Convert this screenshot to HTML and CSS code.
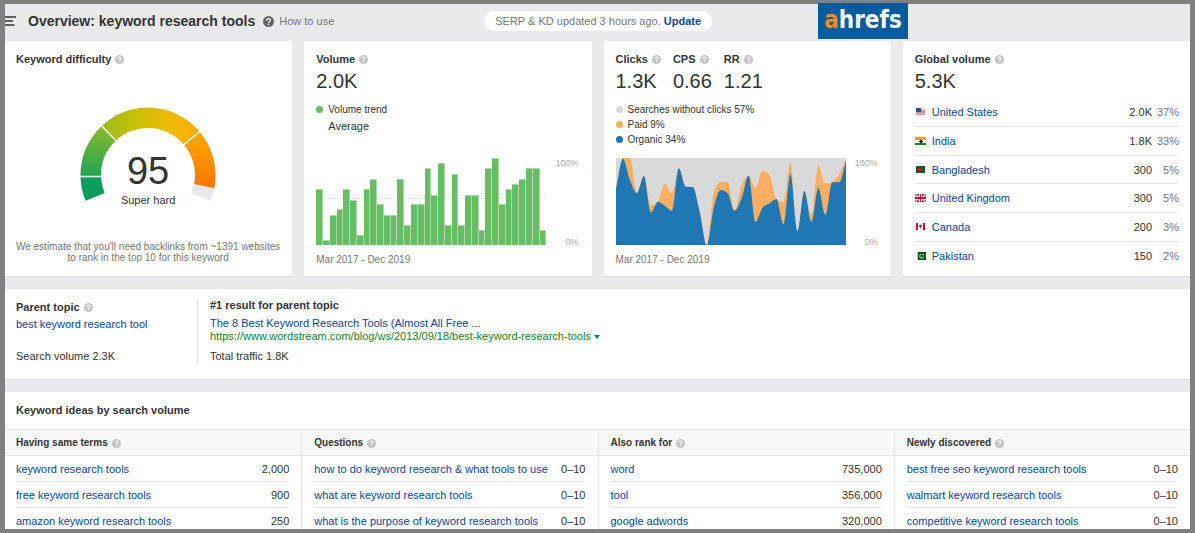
FILE: index.html
```html
<!DOCTYPE html>
<html lang="en">
<head>
<meta charset="utf-8">
<title>Overview: keyword research tools</title>
<link rel="stylesheet" href="styles.css">
<script src="charts.js" defer></script>
</head>
<body>
<svg class="defs" aria-hidden="true">
  <symbol id="help" viewBox="0 0 18 18">
    <circle cx="9" cy="9" r="9" fill="currentColor"/>
    <path d="M6 7.200C6 5.300 7.300 4.200 9 4.200s3 1.100 3 2.700C12 8.900 9 8.900 9 11" fill="none" stroke="#fff" stroke-width="2.200"/>
    <circle cx="9" cy="13.600" r="1.400" fill="#fff"/>
  </symbol>
</svg>
<div class="frame">
<div class="screen">
  <header class="topbar">
    <button class="menu" aria-label="Menu">
      <svg width="11" height="10" viewBox="0 0 11 10" stroke="#333" stroke-width="1.300"><path d="M0 1h11M0 5h8M0 9h9.500"/></svg>
    </button>
    <h1>Overview: keyword research tools</h1>
    <a class="how" href="#"><svg class="help help-dark"><use href="#help"/></svg>How to use</a>
    <p class="status">SERP &amp; KD updated 3 hours ago. <a href="#">Update</a></p>
  </header>

  <main>
    <div class="cards">
      <section class="card">
        <h2>Keyword difficulty <svg class="help"><use href="#help"/></svg></h2>
        <div class="gauge">
          <svg viewBox="0 0 136 100" width="136" height="100" aria-hidden="true">
            <defs>
              <linearGradient id="g1" gradientUnits="userSpaceOnUse" x1="0" y1="26" x2="0" y2="0"><stop offset="0" stop-color="#00995f"/><stop offset="1" stop-color="#10a359"/></linearGradient>
              <linearGradient id="g2" gradientUnits="userSpaceOnUse" x1="0" y1="0" x2="0" y2="-50"><stop offset="0" stop-color="#22a552"/><stop offset="1" stop-color="#8ebb2b"/></linearGradient>
              <linearGradient id="g3" gradientUnits="userSpaceOnUse" x1="-46" y1="0" x2="52" y2="0"><stop offset="0" stop-color="#98bb22"/><stop offset=".3" stop-color="#c3c007"/><stop offset=".65" stop-color="#ecbb08"/><stop offset="1" stop-color="#ffaf00"/></linearGradient>
              <linearGradient id="g4" gradientUnits="userSpaceOnUse" x1="0" y1="-43" x2="0" y2="13"><stop offset="0" stop-color="#ffab00"/><stop offset="1" stop-color="#ff7400"/></linearGradient>
            </defs>
            <g transform="translate(68 68)">
              <path fill="url(#g1)" d="M-62.400 25.800A67.500 67.500 0 0 1-67.500 1.800L-47 1.200A47 47 0 0 0-43.400 18z"/>
              <path fill="url(#g2)" d="M-67.500 1.800A67.500 67.500 0 0 1-46.300-49.100L-32.200-34.200A47 47 0 0 0-47 1.200z"/>
              <path fill="url(#g3)" d="M-46.300-49.100A67.500 67.500 0 0 1 51.600-43.500L35.900-30.300A47 47 0 0 0-32.200-34.200z"/>
              <path fill="url(#g4)" d="M51.600-43.500A67.500 67.500 0 0 1 66.200 13.200L46.100 9.200A47 47 0 0 0 35.900-30.300z"/>
              <path fill="#e9e9eb" d="M66.200 13.200A67.500 67.500 0 0 1 62.400 25.800L43.400 18A47 47 0 0 0 46.100 9.200z"/>
              <path stroke="#fff" stroke-width="1.400" d="M-69 1.500H-46M-47.500-50.500-31.500-33.500M53-44.500 35-29.500"/>
            </g>
          </svg>
          <div class="score"><strong>95</strong><span>Super hard</span></div>
        </div>
        <p class="note">We estimate that you'll need backlinks from ~1391 websites<br>to rank in the top 10 for this keyword</p>
      </section>

      <section class="card">
        <h2>Volume <svg class="help"><use href="#help"/></svg></h2>
        <p class="big">2.0K</p>
        <ul class="legend">
          <li><i class="dot green"></i>Volume trend</li>
          <li class="plain">Average</li>
        </ul>
        <div class="chart">
          <div class="bars" id="bars"></div>
          <div class="axis"><span>100%</span><span>0%</span></div>
        </div>
        <p class="range">Mar 2017 - Dec 2019</p>
      </section>

      <section class="card">
        <div class="stats">
          <div><h2>Clicks <svg class="help"><use href="#help"/></svg></h2><p class="big">1.3K</p></div>
          <div><h2>CPS <svg class="help"><use href="#help"/></svg></h2><p class="big">0.66</p></div>
          <div><h2>RR <svg class="help"><use href="#help"/></svg></h2><p class="big">1.21</p></div>
        </div>
        <ul class="legend">
          <li><i class="dot gray"></i>Searches without clicks 57%</li>
          <li><i class="dot orange"></i>Paid 9%</li>
          <li><i class="dot blue"></i>Organic 34%</li>
        </ul>
        <div class="chart">
          <svg class="area" viewBox="0 0 690 261" preserveAspectRatio="none" aria-hidden="true">
            <path id="paid" fill="#fdae61"/>
            <path id="organic" fill="#1f78b4"/>
          </svg>
          <div class="axis"><span>100%</span><span>0%</span></div>
        </div>
        <p class="range">Mar 2017 - Dec 2019</p>
      </section>

      <section class="card">
        <h2>Global volume <svg class="help"><use href="#help"/></svg></h2>
        <p class="big">5.3K</p>
        <table class="countries">
          <tr><td class="flag"><svg width="11" height="8" viewBox="0 0 11 8"><path fill="#e08a94" d="M1 0h9v7H1z"/><path fill="#f0d5d2" d="M6 0h4v2H6z"/><path fill="#e9b5b8" d="M1 5h9v1H1z"/><path fill="#3c4a78" d="M1 0h5v4H1z"/></svg></td><td><a href="#">United States</a></td><td class="num">2.0K</td><td class="pct">37%</td></tr>
          <tr><td class="flag"><svg width="11" height="8" viewBox="0 0 11 8"><path fill="#fff" d="M0 0h11v8H0z"/><path fill="#ff9933" d="M0 0h11v3H0z"/><path fill="#128807" d="M0 6h11v2H0z"/><path fill="#000080" d="M4 4h4v1H4zM5 3h2v3H5z"/></svg></td><td><a href="#">India</a></td><td class="num">1.8K</td><td class="pct">33%</td></tr>
          <tr><td class="flag"><svg width="11" height="8" viewBox="0 0 11 8"><path fill="#0a5c2c" d="M1 0h9v7H1z"/><circle cx="4.800" cy="3.500" r="2" fill="#f00010"/></svg></td><td><a href="#">Bangladesh</a></td><td class="num">300</td><td class="pct">5%</td></tr>
          <tr><td class="flag"><svg width="11" height="8" viewBox="0 0 11 8"><path fill="#1c2370" d="M0 0h11v8H0z"/><path stroke="#fff" stroke-width="1.600" d="M0 0l11 8M11 0L0 8"/><path stroke="#d5142b" stroke-width=".7" d="M0 0l11 8M11 0L0 8"/><path fill="#f3c4cc" d="M4 0h3v8H4zM0 2h11v4H0z"/><path fill="#d5142b" d="M5 0h1v8H5zM0 3h11v2H0z"/></svg></td><td><a href="#">United Kingdom</a></td><td class="num">300</td><td class="pct">5%</td></tr>
          <tr><td class="flag"><svg width="11" height="8" viewBox="0 0 11 8"><path fill="#fff" d="M1 0h9v7H1z"/><path fill="#c8102e" d="M1 0h2v7H1zM8 0h2v7H8zM5.500 1.300l.7 1.200.9-.2-.3 1.300-.9 1v1h-.6v-1l-1.200-1-.2-1.300.9.200z"/></svg></td><td><a href="#">Canada</a></td><td class="num">200</td><td class="pct">3%</td></tr>
          <tr><td class="flag"><svg width="11" height="8" viewBox="0 0 11 8"><path fill="#b9cdb9" d="M2 0h1v8H2z"/><path fill="#0a5a1c" d="M3 0h8v8H3z"/><path fill="none" stroke="#fff" stroke-width=".9" d="M6 2.200a2 2 0 1 0 2.600 2.600"/><path fill="#fff" d="M7.500 2h1.200v1.200H7.500z"/></svg></td><td><a href="#">Pakistan</a></td><td class="num">150</td><td class="pct">2%</td></tr>
        </table>
      </section>
    </div>

    <section class="card parent">
      <div class="topic">
        <h2>Parent topic <svg class="help"><use href="#help"/></svg></h2>
        <a href="#">best keyword research tool</a>
        <p>Search volume 2.3K</p>
      </div>
      <div class="result">
        <h2>#1 result for parent topic</h2>
        <a href="#">The 8 Best Keyword Research Tools (Almost All Free ...</a>
        <a class="url" href="#">https://www.wordstream.com/blog/ws/2013/09/18/best-keyword-research-tools<svg width="6" height="4" viewBox="0 0 6 4"><path fill="#0a8a4a" d="M0 0h6L3 4z"/></svg></a>
        <p>Total traffic 1.8K</p>
      </div>
    </section>

    <section class="ideas">
      <h2>Keyword ideas by search volume</h2>
      <div class="columns">
        <section class="column">
          <h3>Having same terms <svg class="help"><use href="#help"/></svg></h3>
          <table>
            <tr><td><a href="#">keyword research tools</a></td><td class="num">2,000</td></tr>
            <tr><td><a href="#">free keyword research tools</a></td><td class="num">900</td></tr>
            <tr><td><a href="#">amazon keyword research tools</a></td><td class="num">250</td></tr>
          </table>
        </section>
        <section class="column">
          <h3>Questions <svg class="help"><use href="#help"/></svg></h3>
          <table>
            <tr><td><a href="#">how to do keyword research &amp; what tools to use</a></td><td class="num">0–10</td></tr>
            <tr><td><a href="#">what are keyword research tools</a></td><td class="num">0–10</td></tr>
            <tr><td><a href="#">what is the purpose of keyword research tools</a></td><td class="num">0–10</td></tr>
          </table>
        </section>
        <section class="column">
          <h3>Also rank for <svg class="help"><use href="#help"/></svg></h3>
          <table>
            <tr><td><a href="#">word</a></td><td class="num">735,000</td></tr>
            <tr><td><a href="#">tool</a></td><td class="num">356,000</td></tr>
            <tr><td><a href="#">google adwords</a></td><td class="num">320,000</td></tr>
          </table>
        </section>
        <section class="column">
          <h3>Newly discovered <svg class="help"><use href="#help"/></svg></h3>
          <table>
            <tr><td><a href="#">best free seo keyword research tools</a></td><td class="num">0–10</td></tr>
            <tr><td><a href="#">walmart keyword research tools</a></td><td class="num">0–10</td></tr>
            <tr><td><a href="#">competitive keyword research tools</a></td><td class="num">0–10</td></tr>
          </table>
        </section>
      </div>
    </section>
  </main>
</div>
<div class="logo"><span>a</span>hrefs</div>
</div>
</body>
</html>
```
FILE: styles.css
```css
* { box-sizing: border-box; }

body, h1, h2, h3, p, ul { margin: 0; padding: 0; }

body {
  font: 11px/14px "Liberation Sans", Arial, sans-serif;
  color: #333;
}

a { color: #0a469b; text-decoration: none; }

table { width: 100%; border-collapse: separate; border-spacing: 0; }
td { padding: 0; }

.defs { display: none; }

.frame {
  position: relative;
  height: 100vh;
  padding: 4px 5px;
  background: #808080;
}

.screen {
  height: 100%;
  overflow: hidden;
  background: #eaeaec;
}

/* Top bar */
.topbar {
  display: flex;
  align-items: center;
  height: 37px;
  padding-bottom: 3px;
}

.menu {
  display: flex;
  padding: 0;
  margin-right: 12px;
  border: 0;
  background: none;
}

h1 { font-size: 14px; line-height: 18px; font-weight: bold; }

.how {
  display: flex;
  align-items: center;
  gap: 5px;
  margin-left: 8px;
  color: #777;
}

.help {
  width: 9px;
  height: 9px;
  flex: none;
  color: #c4c4c4;
}

.help-dark { width: 11px; height: 11px; color: #666; }

.status {
  margin-left: 150px;
  padding: 3px 11px;
  border-radius: 10px;
  background: #fff;
  color: #777;
}

.status a { font-weight: bold; }

.logo {
  position: absolute;
  top: 3px;
  right: 287px;
  width: 90px;
  height: 36px;
  background: #005b9f;
  color: #fff;
  font: bold 24px/34px "DejaVu Sans Condensed", "DejaVu Sans", sans-serif;
  text-align: center;
}

.logo span { color: #ff8c0a; }

/* Cards */
.cards {
  display: grid;
  grid-template-columns: repeat(4, 1fr);
  gap: 12px;
}

.card {
  display: flex;
  flex-direction: column;
  padding: 11px 12px 9px;
  border-bottom: 1px solid #dcdcde;
  background: #fff;
}

h2, h3 {
  display: flex;
  align-items: center;
  gap: 4px;
  font-size: 11px;
  line-height: 14px;
  font-weight: bold;
}

.big { margin-top: 3px; font-size: 20px; line-height: 24px; }

.gauge {
  display: grid;
  justify-content: center;
  margin-top: 41px;
}

.gauge > * { grid-area: 1 / 1; }

.score {
  display: flex;
  flex-direction: column;
  align-items: center;
  justify-content: flex-end;
}

.score strong { font-size: 38px; line-height: 44px; font-weight: normal; }

.note {
  margin: auto -8px 4px;
  font-size: 10px;
  line-height: 11px;
  color: #777;
  text-align: center;
}

.legend {
  margin-top: 9px;
  list-style: none;
  font-size: 10px;
  line-height: 15px;
}

.legend li { display: flex; align-items: center; gap: 5px; }
.legend .plain { padding-left: 12px; font-size: 11px; line-height: 18px; }

.dot { width: 7px; height: 7px; border-radius: 50%; }
.green { background: #66bd63; }
.gray { background: #d9d9d9; }
.orange { background: #fdae61; }
.blue { background: #1f78b4; }

.chart { display: flex; height: 87px; margin-top: auto; }

.bars {
  display: flex;
  align-items: flex-end;
  flex: 1;
  background: repeating-linear-gradient(90deg, #d4d4d4 0 1px, transparent 1px 3px) 0 40px / 100% 1px no-repeat;
}

.bar {
  flex: 1;
  border: solid #a9daa7;
  border-width: 1px 1px 0 0;
  background: #66bd63;
}

.area { flex: 1; min-width: 0; height: 100%; background: #d9d9d9; }

.axis {
  display: flex;
  flex-direction: column;
  justify-content: space-between;
  width: 33px;
  height: 89px;
  padding-right: 1px;
  font-size: 9px;
  line-height: 10px;
  color: #a8acb0;
  text-align: right;
}

.range { margin-top: 8px; font-size: 10px; color: #777; }

.stats { display: flex; gap: 12px; }

.countries { height: 171px; margin: 5px 0 -2px; }
.countries td { border-bottom: 1px solid #e6e6e8; }
.countries tr:last-child td { border: 0; }
.flag { width: 17px; line-height: 0; }
.num { text-align: right; }
.pct { width: 27px; color: #777; text-align: right; }

.cards .card:last-child { padding-right: 11px; }
.card:first-child { padding-left: 11px; }

/* Parent topic */
.parent {
  flex-direction: row;
  margin: 12px 0;
  padding: 9px 11px 15px;
}

.topic, .result { display: flex; flex-direction: column; align-items: flex-start; }
.topic { width: 182px; padding-top: 2px; border-right: 1px solid #e6e6e8; }
.topic a { margin-top: 3px; }
.topic p { margin: auto 0 1px; }
.result { padding-left: 12px; }
.result h2 { margin-bottom: 4px; }
.result .url { color: #12822d; line-height: 13px; }
.url svg { margin: 0 0 1px 3px; }
.result p { margin: 6px 0 1px; }

/* Keyword ideas */
.ideas { background: #fff; }
.ideas > h2 { padding: 11px 11px 12px; }

.columns { display: grid; grid-template-columns: repeat(4, 1fr); }
.column + .column { border-left: 1px solid #e6e6e8; }

h3 {
  padding: 6px 12px 5px;
  border: solid #e6e6e8;
  border-width: 1px 0;
  background: #f8f8f8;
  font-size: 10px;
}

.column table { padding: 0 12px; }
.column td { height: 26px; border-bottom: 1px solid #e6e6e8; }
.column:first-child h3, .column:first-child table { padding-left: 11px; }
```
FILE: charts.js
```javascript
// Monthly volume, percent of the peak month
const volume = [64, 6, 35, 41, 64, 52, 11, 64, 76, 47, 35, 35, 76, 23, 47, 47, 88,
  58, 94, 23, 82, 23, 58, 58, 17, 88, 100, 47, 64, 70, 76, 88, 88, 17];

const bars = document.getElementById("bars");
for (const value of volume) {
  const bar = document.createElement("div");
  bar.className = "bar";
  bar.style.height = value + "%";
  bars.append(bar);
}

// Upper edges of the stacked click shares, in chart units from the top
const organic = [91, 2, 66, 105, 54, 164, 131, 143, 158, 31, 86, 87, 161, 261, 150, 96,
  106, 158, 121, 53, 191, 149, 136, 123, 198, 48, 219, 99, 191, 89, 170, 73, 73, 4];
const paid = [89, 0, 0, 105, 54, 142, 131, 77, 105, 31, 86, 87, 161, 261, 106, 72,
  72, 158, 80, 53, 89, 38, 51, 123, 133, 13, 219, 99, 169, 22, 77, 73, 48, 4];

// Area below a monotone cubic curve through the points
function areaPath(ys, width, height) {
  const step = width / (ys.length - 1);
  const slopes = ys.map((y, i) => {
    if (i === 0) return (ys[1] - y) / step;
    if (i === ys.length - 1) return (y - ys[i - 1]) / step;
    const a = (y - ys[i - 1]) / step;
    const b = (ys[i + 1] - y) / step;
    if (a * b <= 0) return 0;
    return Math.sign(a) * Math.min(Math.abs(a), Math.abs(b), Math.abs(a + b) / 4) * 2;
  });
  let d = `M0 ${height}V${ys[0]}`;
  for (let i = 1; i < ys.length; i++) {
    const x0 = (i - 1) * step;
    const x1 = i * step;
    d += `C${x0 + step / 3} ${ys[i - 1] + slopes[i - 1] * step / 3} ${x1 - step / 3} ${ys[i] - slopes[i] * step / 3} ${x1} ${ys[i]}`;
  }
  return d + `V${height}Z`;
}

document.getElementById("paid").setAttribute("d", areaPath(paid, 690, 261));
document.getElementById("organic").setAttribute("d", areaPath(organic, 690, 261));
```
